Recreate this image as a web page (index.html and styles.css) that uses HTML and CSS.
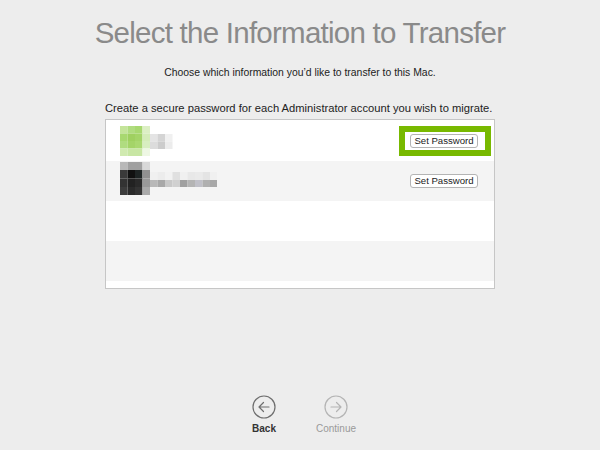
FILE: index.html
```html
<!DOCTYPE html>
<html>
<head>
<meta charset="utf-8">
<link rel="stylesheet" href="styles.css">
</head>
<body>
<div class="page">
  <h1 class="title">Select the Information to Transfer</h1>
  <p class="subtitle">Choose which information you’d like to transfer to this Mac.</p>
  <p class="label">Create a secure password for each Administrator account you wish to migrate.</p>
  <div class="list">
    <div class="row">
      <svg class="user" width="100" height="40" viewBox="0 0 100 40">
        <rect x="0" y="6" width="7.5" height="7.5" fill="#c4e49a"/>
        <rect x="7.5" y="6" width="7.5" height="7.5" fill="#b0dc80"/>
        <rect x="15" y="6" width="7.5" height="7.5" fill="#a8d870"/>
        <rect x="22.5" y="6" width="7.5" height="7.5" fill="#dcefc4"/>
        <rect x="0" y="13.5" width="7.5" height="7.5" fill="#a8d870"/>
        <rect x="7.5" y="13.5" width="7.5" height="7.5" fill="#9fd060"/>
        <rect x="15" y="13.5" width="7.5" height="7.5" fill="#a4d468"/>
        <rect x="22.5" y="13.5" width="7.5" height="7.5" fill="#d4ecb8"/>
        <rect x="0" y="21" width="7.5" height="7.5" fill="#b0dc80"/>
        <rect x="7.5" y="21" width="7.5" height="7.5" fill="#a4d468"/>
        <rect x="15" y="21" width="7.5" height="7.5" fill="#aad870"/>
        <rect x="22.5" y="21" width="7.5" height="7.5" fill="#d8eec0"/>
        <rect x="0" y="28.5" width="7.5" height="7.5" fill="#d0eab0"/>
        <rect x="7.5" y="28.5" width="7.5" height="7.5" fill="#c8e6a4"/>
        <rect x="15" y="28.5" width="7.5" height="7.5" fill="#c8e6a4"/>
        <rect x="22.5" y="28.5" width="7.5" height="7.5" fill="#eef7e4"/>
        <rect x="30" y="14" width="7.5" height="7.5" fill="#e4e4e4"/>
        <rect x="37.5" y="14" width="7.5" height="7.5" fill="#d4d4d4"/>
        <rect x="45" y="14" width="7.5" height="7.5" fill="#f0f0f0"/>
        <rect x="30" y="21.5" width="7.5" height="7.5" fill="#dcdcdc"/>
        <rect x="37.5" y="21.5" width="7.5" height="7.5" fill="#cccccc"/>
        <rect x="45" y="21.5" width="7.5" height="7.5" fill="#ececec"/>
      </svg>
      <button class="btn highlight">Set Password</button>
    </div>
    <div class="row alt">
      <svg class="user" width="100" height="40" viewBox="0 0 100 40">
        <rect x="0" y="1" width="7.5" height="8" fill="#b8b8b8"/>
        <rect x="7.5" y="1" width="7.5" height="8" fill="#a0a0a0"/>
        <rect x="15" y="1" width="7.5" height="8" fill="#a0a0a0"/>
        <rect x="22.5" y="1" width="7.5" height="8" fill="#d8d8d8"/>
        <rect x="0" y="9" width="7.5" height="8.5" fill="#3a3a3a"/>
        <rect x="7.5" y="9" width="7.5" height="8.5" fill="#111111"/>
        <rect x="15" y="9" width="7.5" height="8.5" fill="#1e2424"/>
        <rect x="22.5" y="9" width="7.5" height="8.5" fill="#909090"/>
        <rect x="0" y="17.5" width="7.5" height="8.5" fill="#333333"/>
        <rect x="7.5" y="17.5" width="7.5" height="8.5" fill="#222222"/>
        <rect x="15" y="17.5" width="7.5" height="8.5" fill="#2a2a2a"/>
        <rect x="22.5" y="17.5" width="7.5" height="8.5" fill="#999999"/>
        <rect x="0" y="26" width="7.5" height="8" fill="#3c3c3c"/>
        <rect x="7.5" y="26" width="7.5" height="8" fill="#2a2a2a"/>
        <rect x="15" y="26" width="7.5" height="8" fill="#333333"/>
        <rect x="22.5" y="26" width="7.5" height="8" fill="#aaaaaa"/>
        <rect x="30" y="11" width="7.5" height="8" fill="#f0f0f0"/>
        <rect x="37.5" y="11" width="7.5" height="8" fill="#ececec"/>
        <rect x="45" y="11" width="7.5" height="8" fill="#f2f2f2"/>
        <rect x="52.5" y="11" width="7.5" height="8" fill="#e0e0e0"/>
        <rect x="60" y="11" width="7.5" height="8" fill="#f0f0f0"/>
        <rect x="67.5" y="11" width="7.5" height="8" fill="#e8e8e8"/>
        <rect x="75" y="11" width="7.5" height="8" fill="#eaeaea"/>
        <rect x="82.5" y="11" width="7.5" height="8" fill="#e4e4e4"/>
        <rect x="90" y="11" width="7" height="8" fill="#f0f0f0"/>
        <rect x="30" y="19" width="7.5" height="7" fill="#b8b8b8"/>
        <rect x="37.5" y="19" width="7.5" height="7" fill="#a8a8a8"/>
        <rect x="45" y="19" width="7.5" height="7" fill="#c8c8c8"/>
        <rect x="52.5" y="19" width="7.5" height="7" fill="#d0d0d0"/>
        <rect x="60" y="19" width="7.5" height="7" fill="#a0a0a0"/>
        <rect x="67.5" y="19" width="7.5" height="7" fill="#b4b4b4"/>
        <rect x="75" y="19" width="7.5" height="7" fill="#c0c0c8"/>
        <rect x="82.5" y="19" width="7.5" height="7" fill="#b0b0b0"/>
        <rect x="90" y="19" width="7" height="7" fill="#a8a8a8"/>
      </svg>
      <button class="btn">Set Password</button>
    </div>
    <div class="row"></div>
    <div class="row alt"></div>
  </div>
  <nav class="nav">
    <div class="nav-item">
      <svg class="nav-icon" width="24" height="24" viewBox="0 0 24 24">
        <circle cx="12" cy="12" r="11" fill="none" stroke="#6e6e6e" stroke-width="1.2"/>
        <path d="M17 12H7M11.5 7.5L7 12l4.5 4.5" fill="none" stroke="#6e6e6e" stroke-width="1.2" stroke-linecap="round" stroke-linejoin="round"/>
      </svg>
      <span class="nav-text">Back</span>
    </div>
    <div class="nav-item disabled">
      <svg class="nav-icon" width="24" height="24" viewBox="0 0 24 24">
        <circle cx="12" cy="12" r="11" fill="none" stroke="#b4b4b4" stroke-width="1.2"/>
        <path d="M7 12h10M12.5 7.5L17 12l-4.5 4.5" fill="none" stroke="#b4b4b4" stroke-width="1.2" stroke-linecap="round" stroke-linejoin="round"/>
      </svg>
      <span class="nav-text">Continue</span>
    </div>
  </nav>
</div>
</body>
</html>
```

FILE: styles.css
```css
html, body {
  margin: 0;
  padding: 0;
}
body {
  background: #ededed;
  font-family: "Liberation Sans", Arial, sans-serif;
  color: #222;
  width: 600px;
  height: 450px;
  overflow: hidden;
}
.page {
  display: flex;
  flex-direction: column;
  align-items: center;
  padding-top: 15px;
}
.title {
  margin: 0;
  font-size: 29.5px;
  line-height: 36px;
  font-weight: normal;
  color: #8a8a8a;
  letter-spacing: -0.75px;
}
.subtitle {
  margin: 15px 0 0;
  font-size: 10.4px;
  line-height: 14px;
  color: #222;
}
.label {
  margin: 21px 0 0;
  width: 390px;
  font-size: 11.2px;
  line-height: 14px;
  color: #222;
  white-space: nowrap;
}
.list {
  margin-top: 4px;
  width: 388px;
  height: 168px;
  background: #fff;
  border: 1px solid #c6c6c6;
  display: flex;
  flex-direction: column;
}
.row {
  height: 40px;
  flex: none;
  display: flex;
  align-items: center;
  justify-content: space-between;
  padding: 0 16px 0 14px;
  background: #fff;
}
.row:first-child {
  height: 41px;
}
.row.alt {
  background: #f4f4f4;
}
.user {
  display: block;
  align-self: flex-start;
}
.btn {
  position: relative;
  box-sizing: border-box;
  width: 68px;
  height: 14px;
  padding: 0;
  border: 1px solid #b4b4b4;
  border-radius: 3px;
  background: #fff;
  font-family: "Liberation Sans", Arial, sans-serif;
  font-size: 9.6px;
  line-height: 12px;
  color: #222;
}
.highlight::after {
  content: "";
  position: absolute;
  left: -12px;
  right: -14px;
  top: -9px;
  bottom: -9px;
  border: 6px solid #78b900;
}
.nav {
  margin-top: 106px;
  display: flex;
  gap: 12px;
}
.nav-item {
  width: 60px;
  display: flex;
  flex-direction: column;
  align-items: center;
}
.nav-icon {
  display: block;
}
.nav-text {
  margin-top: 4px;
  font-size: 10px;
  line-height: 12px;
  font-weight: bold;
  color: #333;
}
.disabled .nav-text {
  font-weight: normal;
  color: #9a9a9a;
}
```
